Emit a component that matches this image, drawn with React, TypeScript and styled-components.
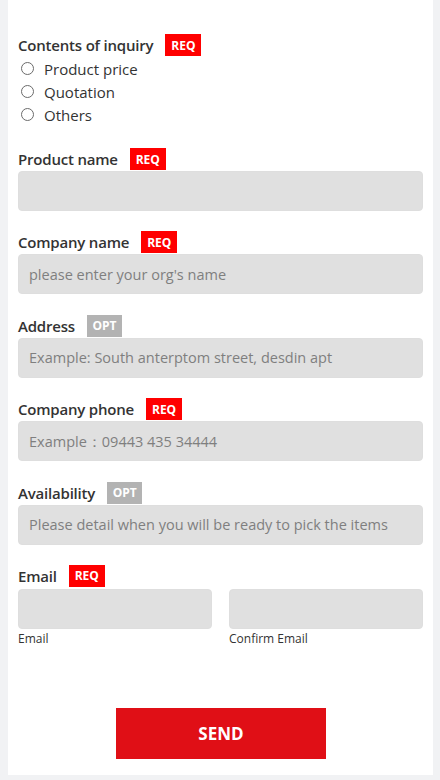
import React from "react";
import styled, { createGlobalStyle } from "styled-components";

const Global = createGlobalStyle`
  html, body { margin: 0; padding: 0; background: #f1f2f4; }
  body { font-family: "Open Sans", "Liberation Sans", sans-serif; color: #333; }
  * { box-sizing: border-box; }
`;

const Panel = styled.form`
  width: 425px;
  margin-left: 8px;
  background: #fff;
  padding: 34px 10px 16px;
  display: flex;
  flex-direction: column;
`;

const Section = styled.div<{ $gap?: number }>`
  display: flex;
  flex-direction: column;
  margin-bottom: ${(p) => p.$gap ?? 20.4}px;
`;

const LabelRow = styled.div`
  display: flex;
  align-items: center;
  height: 22px;
`;

const LabelText = styled.span`
  font-size: 15px;
  font-weight: 600;
  color: #333;
  margin-right: 12px;
  letter-spacing: -0.2px;
`;

const Badge = styled.span<{ $req: boolean }>`
  display: inline-flex;
  align-items: center;
  justify-content: center;
  height: 22px;
  width: ${(p) => (p.$req ? 36 : 35)}px;
  background: ${(p) => (p.$req ? "#ff0000" : "#b3b3b3")};
  color: #fff;
  font-size: 12px;
  font-weight: 700;
`;

const RadioGroup = styled.div`
  display: flex;
  flex-direction: column;
  margin-top: 1px;
`;

const RadioRow = styled.label`
  display: flex;
  align-items: center;
  height: 23px;
  font-size: 15px;
  color: #333;
`;

const RadioCircle = styled.span`
  width: 13px;
  height: 13px;
  border-radius: 50%;
  border: 1px solid #6b6b6b;
  margin-left: 3px;
  margin-right: 10px;
  flex: none;
`;

const Input = styled.input`
  width: 100%;
  height: 40px;
  margin-top: 1px;
  border: 1px solid #dedede;
  border-radius: 4px;
  background: #e0e0e0;
  padding: 0 10px;
  font-family: "Open Sans", "Liberation Sans", sans-serif;
  font-size: 14.5px;
  color: #333;
  outline: none;
  &::placeholder { color: #7f7f7f; }
`;

const EmailGrid = styled.div`
  display: grid;
  grid-template-columns: 1fr 1fr;
  column-gap: 17px;
  margin-top: 1px;
`;

const EmailCol = styled.div`
  display: flex;
  flex-direction: column;
`;

const Caption = styled.span`
  font-size: 12px;
  color: #333;
  margin-top: 1px;
  line-height: 17px;
`;

const SendButton = styled.button`
  align-self: center;
  width: 210px;
  height: 51px;
  margin-top: 61px;
  margin-left: 1px;
  background: #e00f16;
  border: none;
  color: #fff;
  font-family: "Open Sans", "Liberation Sans", sans-serif;
  font-size: 17px;
  font-weight: 700;
  cursor: pointer;
`;

const fields = [
  { label: "Product name", req: true, placeholder: "" },
  { label: "Company name", req: true, placeholder: "please enter your org's name" },
  { label: "Address", req: false, placeholder: "Example: South anterptom street, desdin apt" },
  { label: "Company phone", req: true, placeholder: "Example：09443 435 34444" },
  { label: "Availability", req: false, placeholder: "Please detail when you will be ready to pick the items" },
];

const Label = ({ text, req }: { text: string; req: boolean }) => (
  <LabelRow>
    <LabelText>{text}</LabelText>
    <Badge $req={req}>{req ? "REQ" : "OPT"}</Badge>
  </LabelRow>
);

export default function App() {
  return (
    <>
      <Global />
      <Panel onSubmit={(e) => e.preventDefault()}>
        <Section $gap={22}>
          <Label text="Contents of inquiry" req />
          <RadioGroup>
            {["Product price", "Quotation", "Others"].map((o) => (
              <RadioRow key={o}>
                <RadioCircle />
                {o}
              </RadioRow>
            ))}
          </RadioGroup>
        </Section>
        {fields.map((f) => (
          <Section key={f.label}>
            <Label text={f.label} req={f.req} />
            <Input placeholder={f.placeholder} />
          </Section>
        ))}
        <Section $gap={0}>
          <Label text="Email" req />
          <EmailGrid>
            <EmailCol>
              <Input />
              <Caption>Email</Caption>
            </EmailCol>
            <EmailCol>
              <Input />
              <Caption>Confirm Email</Caption>
            </EmailCol>
          </EmailGrid>
        </Section>
        <SendButton type="submit">SEND</SendButton>
      </Panel>
    </>
  );
}
